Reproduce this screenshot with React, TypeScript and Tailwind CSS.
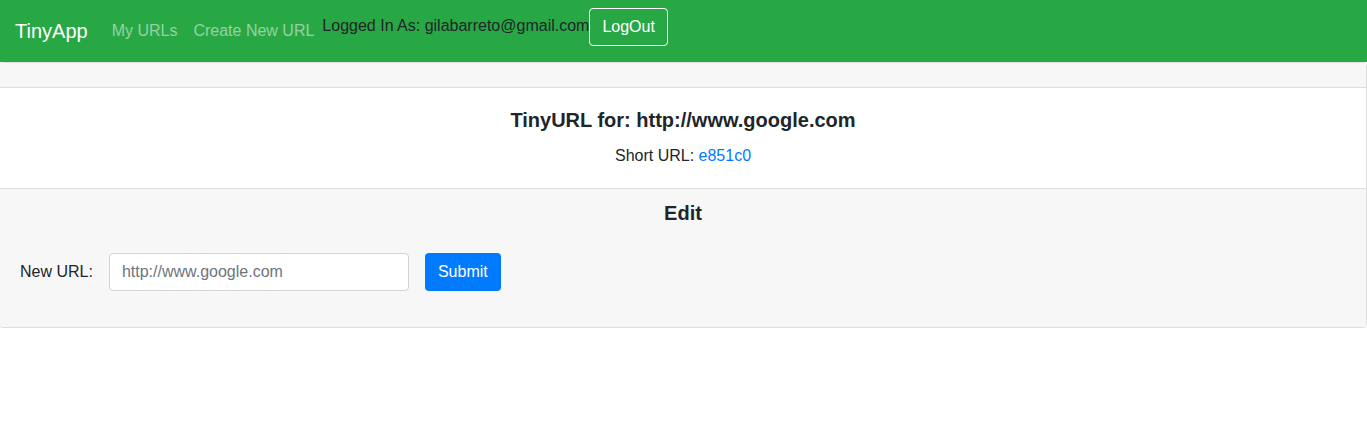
import React from "react";

export default function App() {
  return (
    <div className="min-h-[437px] bg-white text-[#212529] text-[16px] leading-[24px] overflow-hidden" style={{ fontFamily: '"Liberation Sans", Arial, sans-serif' }}>
      <nav className="h-[62px] bg-[#28a745] flex items-start px-4">
        <span className="mt-[16px] text-[20px] leading-[30px] text-white mr-4 -ml-[1px]">TinyApp</span>
        <span className="mt-[19px] px-2 text-white/50">My URLs</span>
        <span className="mt-[19px] px-2 text-white/50">Create New URL</span>
        <span className="mt-[14px] text-[#212529]">Logged In As: gilabarreto@gmail.com</span>
        <button className="mt-2 h-[38px] px-[12px] border border-white rounded-[4px] text-white">LogOut</button>
      </nav>
      <div className="-ml-px border border-[#dfdfdf] rounded-[4px] overflow-hidden">
        <div className="h-[25px] bg-[#f7f7f7] border-b border-[#dfdfdf]"></div>
        <div className="px-5 pt-5 pb-5 text-center">
          <h5 className="text-[20px] leading-[24px] font-bold mb-3">TinyURL for: http://www.google.com</h5>
          <p>
            Short URL: <a className="text-[#007bff]">e851c0</a>
          </p>
        </div>
        <div className="bg-[#f7f7f7] border-t border-[#dfdfdf] px-5 pt-3 pb-[36px]">
          <h5 className="text-[20px] leading-[24px] font-bold text-center">Edit</h5>
          <div className="mt-[28px] flex items-center">
            <label className="mr-4">New URL:</label>
            <input
              className="w-[300px] h-[38px] bg-white border border-[#ced4da] rounded-[4px] px-3 placeholder:text-[#6c757d] outline-none"
              placeholder="http://www.google.com"
            />
            <button className="ml-4 h-[38px] px-[13px] bg-[#007bff] text-white rounded-[4px]">Submit</button>
          </div>
        </div>
      </div>
    </div>
  );
}
